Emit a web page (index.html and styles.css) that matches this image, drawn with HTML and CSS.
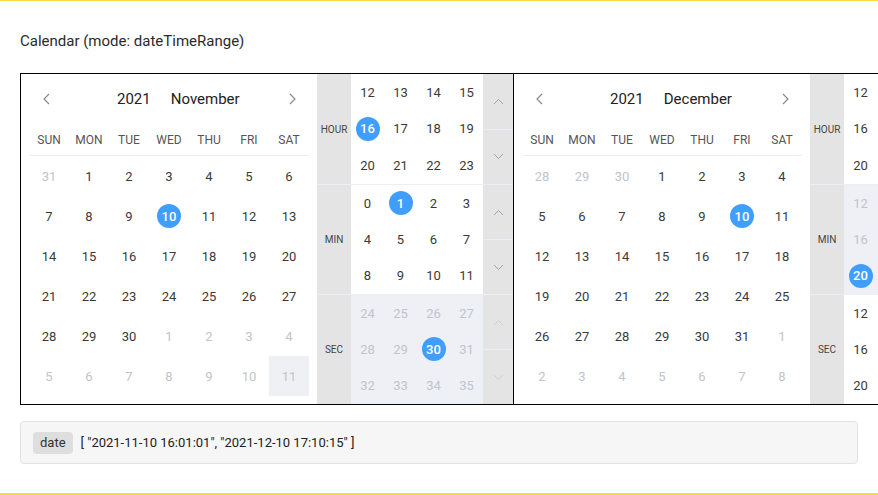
FILE: index.html
```html
<!DOCTYPE html>
<html>
<head>
<meta charset="utf-8">
<link rel="stylesheet" href="styles.css">
</head>
<body>
<div class="frame">
  <div class="title">Calendar (mode: dateTimeRange)</div>
  <div class="cal">
    <!-- Panel 1 -->
    <div class="panel first">
      <div class="dates">
        <div class="nav">
          <span class="navbtn"><svg width="7" height="12" viewBox="0 0 7 12"><polyline points="6,1 1,6 6,11" fill="none" stroke="#8a8a8a" stroke-width="1.2"/></svg></span>
          <span class="ym"><span>2021</span><span>November</span></span>
          <span class="navbtn"><svg width="7" height="12" viewBox="0 0 7 12"><polyline points="1,1 6,6 1,11" fill="none" stroke="#8a8a8a" stroke-width="1.2"/></svg></span>
        </div>
        <div class="week"><span>SUN</span><span>MON</span><span>TUE</span><span>WED</span><span>THU</span><span>FRI</span><span>SAT</span></div>
        <div class="days">
          <span class="off">31</span><span>1</span><span>2</span><span>3</span><span>4</span><span>5</span><span>6</span>
          <span>7</span><span>8</span><span>9</span><span><b class="sel">10</b></span><span>11</span><span>12</span><span>13</span>
          <span>14</span><span>15</span><span>16</span><span>17</span><span>18</span><span>19</span><span>20</span>
          <span>21</span><span>22</span><span>23</span><span>24</span><span>25</span><span>26</span><span>27</span>
          <span>28</span><span>29</span><span>30</span><span class="off">1</span><span class="off">2</span><span class="off">3</span><span class="off">4</span>
          <span class="off">5</span><span class="off">6</span><span class="off">7</span><span class="off">8</span><span class="off">9</span><span class="off">10</span><span class="off hl">11</span>
        </div>
      </div>
      <div class="time">
        <div class="sec-row">
          <div class="lbl">HOUR</div>
          <div class="nums">
            <span>12</span><span>13</span><span>14</span><span>15</span>
            <span><b class="sel">16</b></span><span>17</span><span>18</span><span>19</span>
            <span>20</span><span>21</span><span>22</span><span>23</span>
          </div>
          <div class="arrows">
            <span class="arr"><svg width="11" height="7" viewBox="0 0 11 7"><polyline points="1,6 5.5,1.5 10,6" fill="none" stroke="#a3a3a3" stroke-width="1"/></svg></span>
            <span class="arr"><svg width="11" height="7" viewBox="0 0 11 7"><polyline points="1,1 5.5,5.5 10,1" fill="none" stroke="#a3a3a3" stroke-width="1"/></svg></span>
          </div>
        </div>
        <div class="sec-row">
          <div class="lbl">MIN</div>
          <div class="nums">
            <span>0</span><span><b class="sel">1</b></span><span>2</span><span>3</span>
            <span>4</span><span>5</span><span>6</span><span>7</span>
            <span>8</span><span>9</span><span>10</span><span>11</span>
          </div>
          <div class="arrows">
            <span class="arr"><svg width="11" height="7" viewBox="0 0 11 7"><polyline points="1,6 5.5,1.5 10,6" fill="none" stroke="#a3a3a3" stroke-width="1"/></svg></span>
            <span class="arr"><svg width="11" height="7" viewBox="0 0 11 7"><polyline points="1,1 5.5,5.5 10,1" fill="none" stroke="#a3a3a3" stroke-width="1"/></svg></span>
          </div>
        </div>
        <div class="sec-row dis">
          <div class="lbl">SEC</div>
          <div class="nums">
            <span>24</span><span>25</span><span>26</span><span>27</span>
            <span>28</span><span>29</span><span><b class="sel">30</b></span><span>31</span>
            <span>32</span><span>33</span><span>34</span><span>35</span>
          </div>
          <div class="arrows">
            <span class="arr"><svg width="11" height="7" viewBox="0 0 11 7"><polyline points="1,6 5.5,1.5 10,6" fill="none" stroke="#cfcfcf" stroke-width="1"/></svg></span>
            <span class="arr"><svg width="11" height="7" viewBox="0 0 11 7"><polyline points="1,1 5.5,5.5 10,1" fill="none" stroke="#cfcfcf" stroke-width="1"/></svg></span>
          </div>
        </div>
      </div>
    </div>
    <!-- Panel 2 -->
    <div class="panel">
      <div class="dates">
        <div class="nav">
          <span class="navbtn"><svg width="7" height="12" viewBox="0 0 7 12"><polyline points="6,1 1,6 6,11" fill="none" stroke="#8a8a8a" stroke-width="1.2"/></svg></span>
          <span class="ym"><span>2021</span><span>December</span></span>
          <span class="navbtn"><svg width="7" height="12" viewBox="0 0 7 12"><polyline points="1,1 6,6 1,11" fill="none" stroke="#8a8a8a" stroke-width="1.2"/></svg></span>
        </div>
        <div class="week"><span>SUN</span><span>MON</span><span>TUE</span><span>WED</span><span>THU</span><span>FRI</span><span>SAT</span></div>
        <div class="days">
          <span class="off">28</span><span class="off">29</span><span class="off">30</span><span>1</span><span>2</span><span>3</span><span>4</span>
          <span>5</span><span>6</span><span>7</span><span>8</span><span>9</span><span><b class="sel">10</b></span><span>11</span>
          <span>12</span><span>13</span><span>14</span><span>15</span><span>16</span><span>17</span><span>18</span>
          <span>19</span><span>20</span><span>21</span><span>22</span><span>23</span><span>24</span><span>25</span>
          <span>26</span><span>27</span><span>28</span><span>29</span><span>30</span><span>31</span><span class="off">1</span>
          <span class="off">2</span><span class="off">3</span><span class="off">4</span><span class="off">5</span><span class="off">6</span><span class="off">7</span><span class="off">8</span>
        </div>
      </div>
      <div class="time">
        <div class="sec-row">
          <div class="lbl">HOUR</div>
          <div class="nums">
            <span>12</span><span><b class="sel">17</b></span><span>14</span><span>15</span>
            <span>16</span><span>17</span><span>18</span><span>19</span>
            <span>20</span><span>21</span><span>22</span><span>23</span>
          </div>
          <div class="arrows">
            <span class="arr"><svg width="11" height="7" viewBox="0 0 11 7"><polyline points="1,6 5.5,1.5 10,6" fill="none" stroke="#a3a3a3" stroke-width="1"/></svg></span>
            <span class="arr"><svg width="11" height="7" viewBox="0 0 11 7"><polyline points="1,1 5.5,5.5 10,1" fill="none" stroke="#a3a3a3" stroke-width="1"/></svg></span>
          </div>
        </div>
        <div class="sec-row dis">
          <div class="lbl">MIN</div>
          <div class="nums">
            <span>12</span><span>13</span><span>14</span><span>15</span>
            <span>16</span><span>17</span><span>18</span><span>19</span>
            <span><b class="sel">20</b></span><span>21</span><span>22</span><span>23</span>
          </div>
          <div class="arrows">
            <span class="arr"><svg width="11" height="7" viewBox="0 0 11 7"><polyline points="1,6 5.5,1.5 10,6" fill="none" stroke="#cfcfcf" stroke-width="1"/></svg></span>
            <span class="arr"><svg width="11" height="7" viewBox="0 0 11 7"><polyline points="1,1 5.5,5.5 10,1" fill="none" stroke="#cfcfcf" stroke-width="1"/></svg></span>
          </div>
        </div>
        <div class="sec-row">
          <div class="lbl">SEC</div>
          <div class="nums">
            <span>12</span><span>13</span><span>14</span><span><b class="sel">15</b></span>
            <span>16</span><span>17</span><span>18</span><span>19</span>
            <span>20</span><span>21</span><span>22</span><span>23</span>
          </div>
          <div class="arrows">
            <span class="arr"><svg width="11" height="7" viewBox="0 0 11 7"><polyline points="1,6 5.5,1.5 10,6" fill="none" stroke="#a3a3a3" stroke-width="1"/></svg></span>
            <span class="arr"><svg width="11" height="7" viewBox="0 0 11 7"><polyline points="1,1 5.5,5.5 10,1" fill="none" stroke="#a3a3a3" stroke-width="1"/></svg></span>
          </div>
        </div>
      </div>
    </div>
  </div>
  <div class="info"><span class="tag">date</span><span class="val">[ "2021-11-10 16:01:01", "2021-12-10 17:10:15" ]</span></div>
</div>
</body>
</html>
```
FILE: styles.css
```css
html, body {
  margin: 0;
  padding: 0;
  background: #fff;
  overflow: hidden;
}
body {
  font-family: Roboto, "Noto Sans", sans-serif;
  color: #333;
}
.frame {
  box-sizing: border-box;
  height: 495px;
  border-top: 1px solid #f6dc3d;
  border-bottom: 2px solid #f6dc3d;
  padding: 30px 20px 0 20px;
  overflow: hidden;
}
.title {
  font-size: 15px;
  line-height: 20px;
  color: #2b2b2b;
  margin-bottom: 22px;
}
.cal {
  display: flex;
  width: max-content;
  border: 1px solid #000;
}
.panel {
  display: flex;
}
.panel.first {
  border-right: 1px solid #000;
}
.dates {
  width: 280px;
  padding: 8px;
}
.nav {
  display: flex;
  align-items: center;
  height: 33px;
}
.navbtn {
  width: 34px;
  display: flex;
  justify-content: center;
  align-items: center;
}
.ym {
  flex: 1;
  display: flex;
  gap: 20px;
  padding-left: 54px;
  font-size: 15px;
  color: #222;
}
.week {
  display: grid;
  grid-template-columns: repeat(7, 40px);
  padding-top: 10px;
  height: 30px;
  line-height: 30px;
  border-bottom: 1px solid #eceef3;
  font-size: 12px;
  color: #555;
  text-align: center;
}
.days {
  display: grid;
  grid-template-columns: repeat(7, 40px);
  grid-auto-rows: 40px;
  font-size: 13px;
  color: #3a3a3a;
}
.days span, .nums span {
  display: flex;
  align-items: center;
  justify-content: center;
}
.days .off {
  color: #c0c4cc;
}
.days .hl {
  background: #eef0f4;
}
.sel {
  width: 24px;
  height: 24px;
  border-radius: 50%;
  background: #409eff;
  color: #fff;
  font-weight: 500;
  display: flex;
  align-items: center;
  justify-content: center;
}
.time {
  display: flex;
  flex-direction: column;
}
.sec-row {
  display: flex;
  height: 110px;
  box-sizing: border-box;
}
.sec-row + .sec-row {
  border-top: 1px solid #eceef4;
}
.lbl {
  width: 34px;
  background: #e4e4e4;
  font-size: 10px;
  color: #444;
  display: flex;
  align-items: center;
  justify-content: center;
}
.nums {
  width: 132px;
  display: grid;
  grid-template-columns: repeat(4, 33px);
  grid-template-rows: repeat(3, 1fr);
  font-size: 13px;
  color: #3a3a3a;
}
.dis .nums {
  background: #eef0f5;
  color: #c0c4cc;
}
.arrows {
  width: 30px;
  background: #e4e4e4;
  display: flex;
  flex-direction: column;
}
.arr {
  flex: 1;
  display: flex;
  align-items: center;
  justify-content: center;
}
.arr + .arr {
  border-top: 1px solid #eceef4;
}
.info {
  margin-top: 16px;
  box-sizing: border-box;
  height: 43px;
  border: 1px solid #e2e2e2;
  border-radius: 4px;
  background: #f6f6f6;
  display: flex;
  align-items: center;
  padding-left: 12px;
  gap: 8px;
  font-size: 13px;
  color: #222;
}
.tag {
  background: #dedede;
  border-radius: 4px;
  height: 22px;
  line-height: 22px;
  padding: 0 7px;
  color: #333;
}
```
